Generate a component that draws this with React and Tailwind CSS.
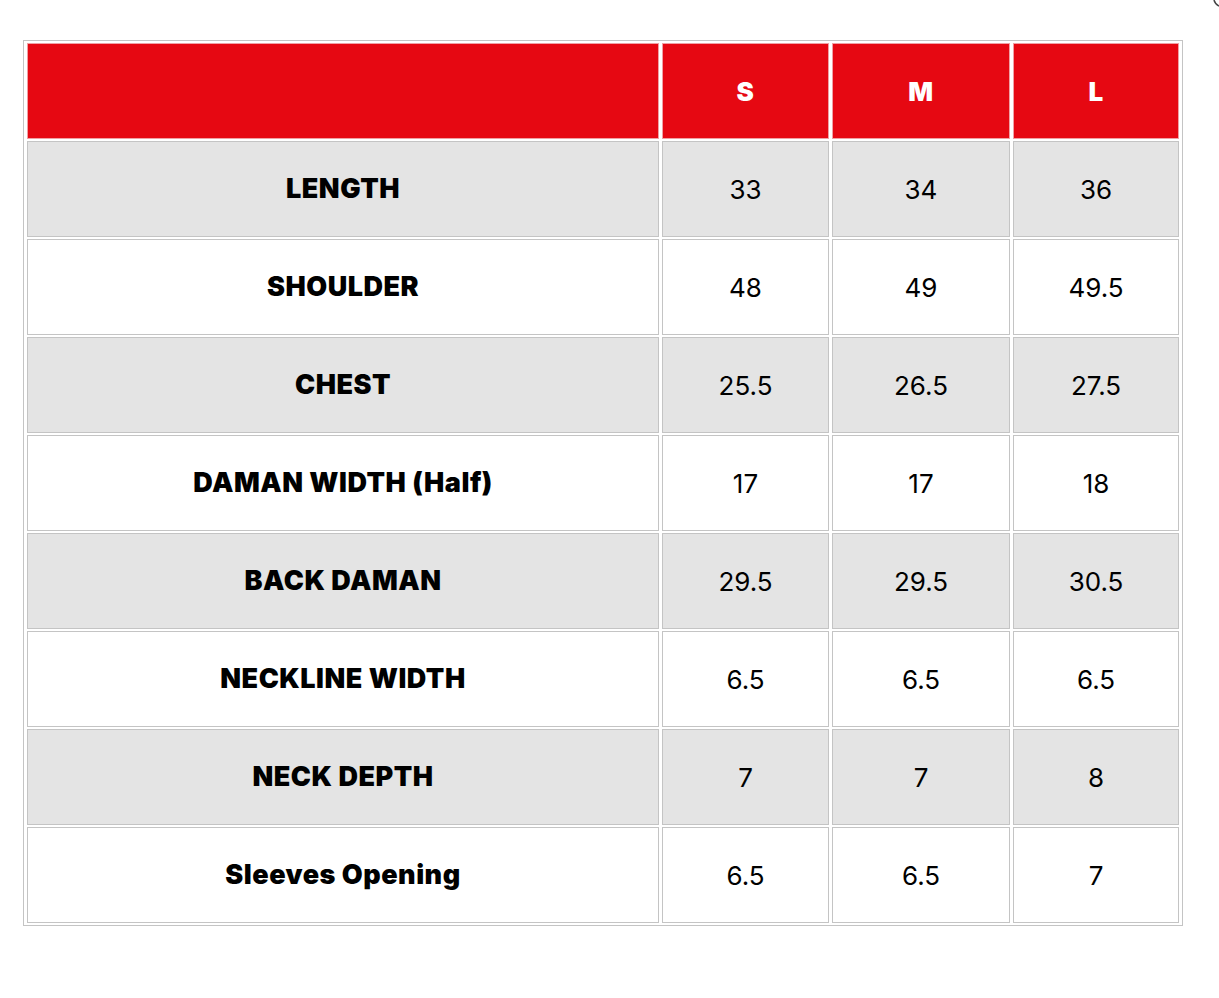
const sizes = ["S", "M", "L"];

// rows of the size chart, values in inches
const rows = [
  { label: "LENGTH", values: ["33", "34", "36"] },
  { label: "SHOULDER", values: ["48", "49", "49.5"] },
  { label: "CHEST", values: ["25.5", "26.5", "27.5"] },
  { label: "DAMAN WIDTH (Half)", values: ["17", "17", "18"] },
  { label: "BACK DAMAN", values: ["29.5", "29.5", "30.5"] },
  { label: "NECKLINE WIDTH", values: ["6.5", "6.5", "6.5"] },
  { label: "NECK DEPTH", values: ["7", "7", "8"] },
  { label: "Sleeves Opening", values: ["6.5", "6.5", "7"] },
];

const colWidths = ["w-[632px]", "w-[167px]", "w-[178px]", "w-[166px]"];

export default function App() {
  return (
    <div className="relative min-h-[998px] bg-white pt-10 pl-[23px] font-['Inter','Liberation_Sans',sans-serif]">
      {/* corner fragment */}
      <svg className="absolute right-0 top-0" width="8" height="8" viewBox="0 0 8 8">
        <path d="M3 0 Q4 4 8 6" stroke="#444" strokeWidth="1.5" fill="none" />
      </svg>

      <table className="border border-[#c4c4c4] border-separate border-spacing-x-[3px] border-spacing-y-[2px] text-black">
        <thead>
          <tr>
            <th className={`${colWidths[0]} h-[96px] bg-[#e60812] border border-[#f0a0a4]`}></th>
            {sizes.map((s, i) => (
              <th
                key={s}
                className={`${colWidths[i + 1]} h-[96px] bg-[#e60812] border border-[#f0a0a4] text-white text-[26px] font-black text-center tracking-[0.5px]`}
              >
                {s}
              </th>
            ))}
          </tr>
        </thead>
        <tbody>
          {rows.map((row, r) => {
            const bg = r % 2 === 0 ? "bg-[#e4e4e4]" : "bg-white";
            return (
              <tr key={row.label}>
                <td className={`${colWidths[0]} h-[96px] ${bg} border border-[#c4c4c4] text-center text-[27px] font-black tracking-[0.5px]`}>
                  {row.label}
                </td>
                {row.values.map((v, i) => (
                  <td
                    key={i}
                    className={`${colWidths[i + 1]} h-[96px] ${bg} border border-[#c4c4c4] text-center text-[26px] font-normal`}
                  >
                    {v}
                  </td>
                ))}
              </tr>
            );
          })}
        </tbody>
      </table>
    </div>
  );
}
